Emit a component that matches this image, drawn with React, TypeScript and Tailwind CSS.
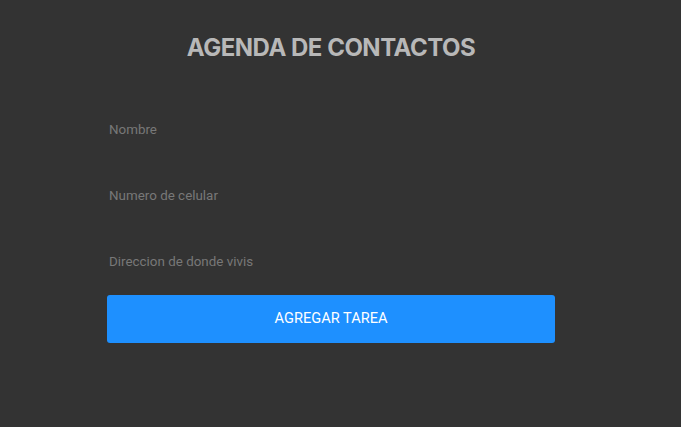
export default function App() {
  const fields = ['Nombre', 'Numero de celular', 'Direccion de donde vivis']

  return (
    <div className="min-h-[427px] w-full bg-[#333333] font-['Roboto',sans-serif]">
      <div className="ml-[107px] w-[448px] pt-[33px]">
        <h1 className="text-center font-['Inter',sans-serif] text-[24px] font-bold leading-[30px] tracking-[-0.5px] text-[#b8b8b8]">
          AGENDA DE CONTACTOS
        </h1>

        <form className="mt-[44px] flex flex-col gap-[22px]" onSubmit={(e) => e.preventDefault()}>
          {fields.map((f) => (
            <input
              key={f}
              placeholder={f}
              className="h-[44px] w-full bg-transparent px-[2px] text-[13.4px] text-[#ccc] outline-none placeholder:text-[#787878]"
            />
          ))}
        </form>

        <button className="mt-[12px] h-[48px] w-full rounded-[3px] bg-[#1e90ff] text-[14.6px] text-white">
          AGREGAR TAREA
        </button>
      </div>
    </div>
  )
}
